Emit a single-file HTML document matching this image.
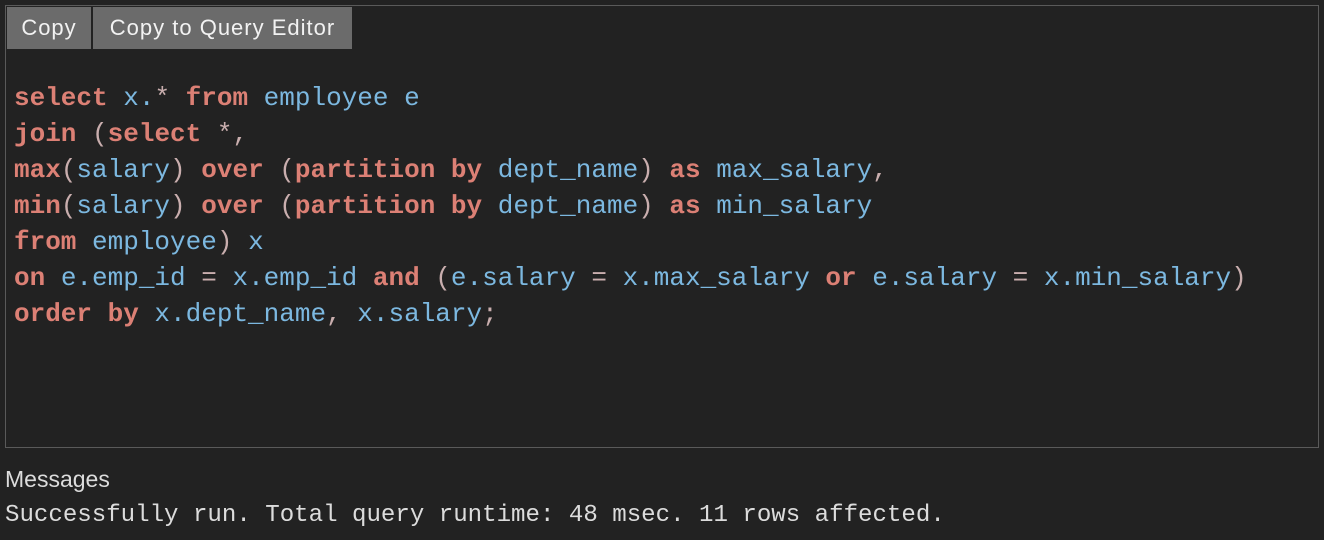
<!DOCTYPE html>
<html><head><style>
body{margin:0;background:#222222;width:1324px;height:540px;overflow:hidden;}
.box{position:absolute;left:5px;top:5px;width:1312px;height:441px;border:1px solid #5a5a5a;}
.btn{position:absolute;top:1px;height:42px;background:#6b6b6b;color:#f2f2f2;font:22px "Liberation Sans",sans-serif;letter-spacing:1px;line-height:42px;text-align:center;}
pre{position:absolute;left:8px;top:74px;margin:0;font:bold 26px/36px "Liberation Mono",monospace;color:#c9aeae;}
.k{color:#dc8075;}
.i{color:#7cb8e0;font-weight:normal;}
.p{color:#c9aeae;font-weight:normal;}
.m{position:absolute;left:5px;top:466px;color:#dcdcdc;font:23px "Liberation Sans",sans-serif;}
.r{position:absolute;left:5px;top:502px;color:#dcdcdc;font:24.1px "Liberation Mono",monospace;white-space:pre;}
</style></head><body>
<div class="box">
<div class="btn" style="left:1px;width:84px">Copy</div>
<div class="btn" style="left:87px;width:259px">Copy to Query Editor</div>
<pre><span class="k">select</span><span class="i"> x.</span><span class="p">*</span> <span class="k">from</span><span class="i"> employee e</span>
<span class="k">join</span><span class="p"> (</span><span class="k">select</span><span class="p"> *,</span>
<span class="k">max</span><span class="p">(</span><span class="i">salary</span><span class="p">) </span><span class="k">over</span><span class="p"> (</span><span class="k">partition by</span><span class="i"> dept_name</span><span class="p">) </span><span class="k">as</span><span class="i"> max_salary</span><span class="p">,</span>
<span class="k">min</span><span class="p">(</span><span class="i">salary</span><span class="p">) </span><span class="k">over</span><span class="p"> (</span><span class="k">partition by</span><span class="i"> dept_name</span><span class="p">) </span><span class="k">as</span><span class="i"> min_salary</span>
<span class="k">from</span><span class="i"> employee</span><span class="p">) </span><span class="i">x</span>
<span class="k">on</span><span class="i"> e.emp_id </span><span class="p">=</span><span class="i"> x.emp_id </span><span class="k">and</span><span class="p"> (</span><span class="i">e.salary </span><span class="p">=</span><span class="i"> x.max_salary </span><span class="k">or</span><span class="i"> e.salary </span><span class="p">=</span><span class="i"> x.min_salary</span><span class="p">)</span>
<span class="k">order by</span><span class="i"> x.dept_name</span><span class="p">, </span><span class="i">x.salary</span><span class="p">;</span></pre>
</div>
<div class="m">Messages</div>
<div class="r">Successfully run. Total query runtime: 48 msec. 11 rows affected.</div>
</body></html>
